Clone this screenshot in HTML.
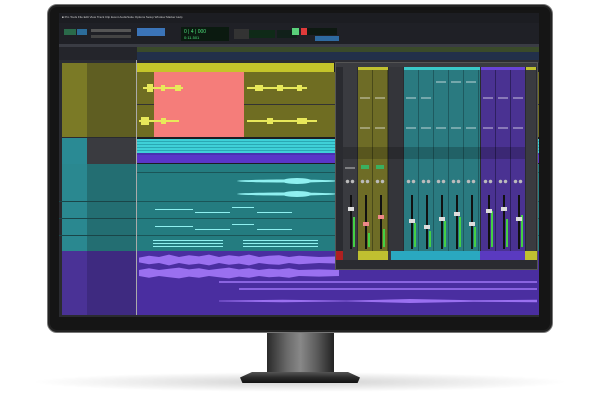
<!DOCTYPE html><html><head><style>
*{margin:0;padding:0;box-sizing:border-box}
body{width:600px;height:400px;background:#fff;position:relative;overflow:hidden;font-family:"Liberation Sans",sans-serif}
.a{position:absolute}
.t{font-size:3px;color:#ccc;white-space:nowrap}
.s{position:absolute;top:4px;width:14px;height:184px}
.s .f{position:absolute;left:7px;top:128px;width:2px;height:54px;background:#111}
.s .m{position:absolute;left:10px;width:2px;background:#44d044;bottom:4px}
.s .c{position:absolute;left:5px;width:6px;height:4px;background:#ddd}
.s .k{position:absolute;left:2px;top:112px;width:10px;height:5px;background:radial-gradient(circle at 25% 50%,#bbb 0 1.5px,transparent 2px),radial-gradient(circle at 75% 50%,#bbb 0 1.5px,transparent 2px)}
.s .b{position:absolute;left:2px;width:10px;height:2px;background:rgba(255,255,255,.35)}
.s .g{position:absolute;left:3px;top:98px;width:8px;height:4px;background:#3ab060}
</style></head><body>
<div class="a" style="left:30px;top:372px;width:540px;height:20px;border-radius:50%;background:radial-gradient(ellipse at center,rgba(0,0,0,.18),rgba(0,0,0,0) 70%)"></div>
<div class="a" style="left:267px;top:330px;width:67px;height:44px;background:linear-gradient(90deg,#2a2a2a,#6a6a6a 30%,#888 50%,#5a5a5a 75%,#222)"></div>
<div class="a" style="left:240px;top:372px;width:120px;height:11px;background:linear-gradient(180deg,#555,#2a2a2a 50%,#111);clip-path:polygon(10% 0,90% 0,100% 50%,98% 100%,2% 100%,0 50%)"></div>
<div class="a" style="left:47px;top:4px;width:506px;height:329px;border-radius:10px;background:#151515;border:1px solid #777;box-shadow:inset 0 0 0 2px #222"></div>
<div class="a" style="left:59px;top:13px;width:480px;height:304px;background:#1c1d22;overflow:hidden">
 <div class="a t" style="left:3px;top:2px;font-size:3px">■ Pro Tools File Edit View Track Clip Event AudioSuite Options Setup Window Marker Help</div>
 <div class="a" style="left:0;top:10px;width:480px;height:21px;background:#1f2026"></div>
 <div class="a" style="left:5px;top:16px;width:12px;height:6px;background:#2a6a4a"></div>
 <div class="a" style="left:18px;top:16px;width:10px;height:6px;background:#2c6c9a"></div>
 <div class="a" style="left:32px;top:16px;width:40px;height:3px;background:#555"></div>
 <div class="a" style="left:32px;top:22px;width:40px;height:3px;background:#444"></div>
 <div class="a" style="left:78px;top:15px;width:28px;height:8px;background:#3b74b8"></div>
 <div class="a" style="left:122px;top:14px;width:48px;height:14px;background:#0b1a10"></div>
 <div class="a t" style="left:125px;top:16px;color:#4de07a;font-size:5px">0 | 4 | 000</div>
 <div class="a t" style="left:125px;top:22px;color:#4de07a;font-size:4px">0:11.501</div>
 <div class="a" style="left:175px;top:16px;width:15px;height:10px;background:#333"></div>
 <div class="a" style="left:190px;top:17px;width:26px;height:8px;background:#0f2a18"></div>
 <div class="a" style="left:218px;top:17px;width:20px;height:8px;background:#11201a"></div>
 <div class="a" style="left:233px;top:15px;width:7px;height:7px;background:#5ad07a"></div>
 <div class="a" style="left:242px;top:15px;width:7px;height:7px;background:#e03a3a"></div>
 <div class="a" style="left:248px;top:15px;width:30px;height:7px;background:#0e1912"></div>
 <div class="a" style="left:256px;top:23px;width:24px;height:5px;background:#2e6aa0"></div>
 <div class="a" style="left:0;top:31px;width:480px;height:3px;background:#3a3c44"></div>
 <div class="a" style="left:78px;top:34px;width:402px;height:5px;background:#3a4a2a"></div>
 <div class="a" style="left:78px;top:39px;width:402px;height:8px;background:#22304a"></div>
 <div class="a" style="left:0;top:34px;width:78px;height:15px;background:#24252b"></div>
 <div class="a" style="left:0;top:47px;width:480px;height:3px;background:#2b2c32"></div>
 <div class="a" style="left:0;top:50px;width:78px;height:254px;background:#2a2b30"></div>
 <div class="a" style="left:3px;top:50px;width:25px;height:74px;background:#7b7a26"></div>
 <div class="a" style="left:28px;top:50px;width:50px;height:74px;background:#5f5e22"></div>
 <div class="a" style="left:78px;top:50px;width:197px;height:9px;background:#c5c42a"></div>
 <div class="a" style="left:78px;top:59px;width:402px;height:65px;background:#6f6d22"></div>
 <div class="a" style="left:78px;top:91px;width:402px;height:1px;background:#333"></div>
 <div class="a" style="left:95px;top:59px;width:90px;height:65px;background:#f57d7a"></div>
 <svg class="a" style="left:78px;top:59px" width="260" height="65"><g fill="#e8e85a">
  <rect x="6" y="15" width="40" height="2"/><rect x="10" y="12" width="6" height="8"/><rect x="24" y="13" width="4" height="6"/><rect x="38" y="13" width="6" height="6"/>
  <rect x="110" y="15" width="60" height="2"/><rect x="118" y="13" width="8" height="6"/><rect x="140" y="13" width="6" height="6"/><rect x="160" y="13" width="5" height="6"/>
  <rect x="2" y="48" width="40" height="2"/><rect x="4" y="45" width="8" height="8"/><rect x="24" y="46" width="5" height="6"/>
  <rect x="110" y="48" width="70" height="2"/><rect x="130" y="46" width="6" height="6"/><rect x="160" y="46" width="10" height="6"/></g></svg>
 <div class="a" style="left:3px;top:125px;width:25px;height:26px;background:#2a8a94"></div>
 <div class="a" style="left:28px;top:125px;width:50px;height:26px;background:#3a3b40"></div>
 <div class="a" style="left:78px;top:126px;width:402px;height:14px;background:repeating-linear-gradient(180deg,#3fd0d8 0 2px,#2aa8b4 2px 3px)"></div>
 <div class="a" style="left:78px;top:140px;width:402px;height:10px;background:#5a35c8;border-top:2px solid #4930b0"></div>
 <div class="a" style="left:3px;top:151px;width:25px;height:87px;background:#2a8890"></div>
 <div class="a" style="left:28px;top:151px;width:50px;height:87px;background:#236e72"></div>
 <div class="a" style="left:78px;top:151px;width:402px;height:87px;background:#247c80"></div>
 <div class="a" style="left:78px;top:159px;width:402px;height:1px;background:#1a5558"></div>
 <div class="a" style="left:78px;top:188px;width:402px;height:1px;background:#1a5558"></div>
 <div class="a" style="left:78px;top:205px;width:402px;height:1px;background:#1a5558"></div>
 <div class="a" style="left:78px;top:222px;width:402px;height:1px;background:#1a5558"></div>
 <div class="a" style="left:0;top:188px;width:78px;height:1px;background:#1a4548"></div>
 <div class="a" style="left:0;top:205px;width:78px;height:1px;background:#1a4548"></div>
 <div class="a" style="left:0;top:222px;width:78px;height:1px;background:#1a4548"></div>
 <svg class="a" style="left:78px;top:151px" width="270" height="87"><g fill="#8ff0f0">
  <ellipse cx="150" cy="17" rx="50" ry="1.5"/><ellipse cx="160" cy="17" rx="15" ry="3"/>
  <ellipse cx="150" cy="30" rx="50" ry="1.5"/><ellipse cx="160" cy="30" rx="15" ry="3"/>
  <rect x="18" y="45" width="38" height="1"/><rect x="58" y="48" width="35" height="1"/><rect x="95" y="43" width="22" height="1"/><rect x="120" y="48" width="35" height="1"/>
  <rect x="18" y="62" width="38" height="1"/><rect x="58" y="65" width="35" height="1"/><rect x="95" y="60" width="22" height="1"/><rect x="120" y="65" width="35" height="1"/>
  <rect x="16" y="76" width="70" height="1"/><rect x="16" y="79" width="70" height="1"/><rect x="16" y="82" width="70" height="1"/><rect x="106" y="76" width="75" height="1"/><rect x="106" y="79" width="75" height="1"/><rect x="106" y="82" width="75" height="1"/></g></svg>
 <div class="a" style="left:3px;top:238px;width:25px;height:64px;background:#4a3296"></div>
 <div class="a" style="left:28px;top:238px;width:50px;height:64px;background:#3e2a80"></div>
 <div class="a" style="left:78px;top:238px;width:402px;height:64px;background:#4a2ea0"></div>
 <div class="a" style="left:80px;top:241px;width:200px;height:12px;background:#9a70f0;clip-path:polygon(0 30%,5% 15%,10% 25%,15% 5%,20% 25%,25% 10%,30% 20%,35% 5%,40% 25%,45% 10%,50% 20%,55% 5%,60% 25%,65% 15%,70% 10%,75% 25%,80% 15%,90% 25%,100% 20%,100% 80%,90% 75%,80% 85%,75% 75%,70% 90%,65% 85%,60% 75%,55% 95%,50% 80%,45% 90%,40% 75%,35% 95%,30% 80%,25% 90%,20% 75%,15% 95%,10% 75%,5% 85%,0 70%)"></div>
 <div class="a" style="left:80px;top:254px;width:200px;height:12px;background:#9a70f0;clip-path:polygon(0 25%,5% 10%,10% 25%,15% 15%,20% 5%,25% 20%,30% 10%,35% 25%,40% 15%,45% 5%,50% 20%,55% 10%,60% 25%,65% 15%,70% 20%,75% 10%,80% 25%,90% 20%,100% 25%,100% 75%,90% 80%,80% 75%,75% 90%,70% 80%,65% 85%,60% 75%,55% 90%,50% 80%,45% 95%,40% 85%,35% 75%,30% 90%,25% 80%,20% 95%,15% 85%,10% 75%,5% 90%,0 75%)"></div>
 <div class="a" style="left:160px;top:268px;width:318px;height:2px;background:#8a64e0"></div>
 <div class="a" style="left:180px;top:275px;width:298px;height:2px;background:#8a64e0"></div>
 <div class="a" style="left:160px;top:286px;width:318px;height:4px;background:#9a70f0;clip-path:polygon(0 40%,20% 20%,40% 40%,60% 0,80% 30%,100% 20%,100% 80%,80% 70%,60% 100%,40% 60%,20% 80%,0 60%)"></div>
 <div class="a" style="left:0;top:302px;width:480px;height:2px;background:#2a2b30"></div>
 <div class="a" style="left:77px;top:47px;width:1px;height:255px;background:#aaa"></div>
 <!-- mixer -->
 <div class="a" style="left:276px;top:49px;width:203px;height:208px;background:#2a2b30;border:1px solid #555">
  <div class="a" style="left:0;top:0;width:201px;height:4px;background:#3a3b40"></div>
  <div class="a" style="left:7px;top:4px;width:14px;height:184px;background:#3a3b40"></div>
  <div class="a" style="left:22px;top:4px;width:30px;height:184px;background:repeating-linear-gradient(90deg,#6e6c26 0 14px,#4a4a1a 14px 15px);border-top:3px solid #c0c030"></div>
  <div class="a" style="left:53px;top:4px;width:14px;height:184px;background:#34353a"></div>
  <div class="a" style="left:68px;top:4px;width:76px;height:184px;background:repeating-linear-gradient(90deg,#2a7a80 0 14px,#1e5a60 14px 15px);border-top:3px solid #3ac8c8"></div>
  <div class="a" style="left:145px;top:4px;width:44px;height:184px;background:repeating-linear-gradient(90deg,#4a3292 0 14px,#2e2060 14px 15px);border-top:3px solid #6a44d8"></div>
  <div class="a" style="left:190px;top:4px;width:10px;height:184px;background:#3a3b40;border-top:3px solid #c0c030"></div>
  <div class="a" style="left:7px;top:84px;width:182px;height:12px;background:rgba(0,0,0,.2)"></div>
  <div class="s" style="left:7px"><div class="b" style="top:100px"></div><div class="k"></div><div class="f"></div><div class="m" style="height:30px"></div><div class="c" style="top:140px"></div></div>
  <div class="s" style="left:22px"><div class="b" style="top:30px"></div><div class="b" style="top:60px"></div><div class="g"></div><div class="k"></div><div class="f"></div><div class="m" style="height:14px"></div><div class="c" style="top:155px;background:#e88"></div></div>
  <div class="s" style="left:37px"><div class="b" style="top:30px"></div><div class="b" style="top:60px"></div><div class="g"></div><div class="k"></div><div class="f"></div><div class="m" style="height:18px"></div><div class="c" style="top:148px;background:#e88"></div></div>
  <div class="s" style="left:68px"><div class="b" style="top:30px"></div><div class="b" style="top:60px"></div><div class="k"></div><div class="f"></div><div class="m" style="height:24px"></div><div class="c" style="top:152px"></div></div>
  <div class="s" style="left:83px"><div class="b" style="top:30px"></div><div class="b" style="top:60px"></div><div class="k"></div><div class="f"></div><div class="m" style="height:16px"></div><div class="c" style="top:158px"></div></div>
  <div class="s" style="left:98px"><div class="b" style="top:14px"></div><div class="b" style="top:60px"></div><div class="k"></div><div class="f"></div><div class="m" style="height:26px"></div><div class="c" style="top:150px"></div></div>
  <div class="s" style="left:113px"><div class="b" style="top:14px"></div><div class="b" style="top:60px"></div><div class="k"></div><div class="f"></div><div class="m" style="height:30px"></div><div class="c" style="top:145px"></div></div>
  <div class="s" style="left:128px"><div class="b" style="top:14px"></div><div class="b" style="top:60px"></div><div class="k"></div><div class="f"></div><div class="m" style="height:20px"></div><div class="c" style="top:155px"></div></div>
  <div class="s" style="left:145px"><div class="b" style="top:30px"></div><div class="b" style="top:60px"></div><div class="k"></div><div class="f"></div><div class="m" style="height:36px"></div><div class="c" style="top:142px"></div></div>
  <div class="s" style="left:160px"><div class="b" style="top:30px"></div><div class="b" style="top:60px"></div><div class="k"></div><div class="f"></div><div class="m" style="height:28px"></div><div class="c" style="top:140px"></div></div>
  <div class="s" style="left:175px"><div class="b" style="top:30px"></div><div class="b" style="top:60px"></div><div class="k"></div><div class="f"></div><div class="m" style="height:32px"></div><div class="c" style="top:150px"></div></div>
  <div class="a" style="left:0;top:188px;width:201px;height:9px;background:linear-gradient(90deg,#b02020 0 7px,#3a3b40 7px 22px,#c0c030 22px 52px,#3a3b40 52px 55px,#2aa8c0 55px 144px,#5a3ac0 144px 189px,#c0c030 189px)"></div>
  <div class="a" style="left:0;top:197px;width:201px;height:9px;background:#2a2b30"></div>
 </div>
</div>
</body></html>
